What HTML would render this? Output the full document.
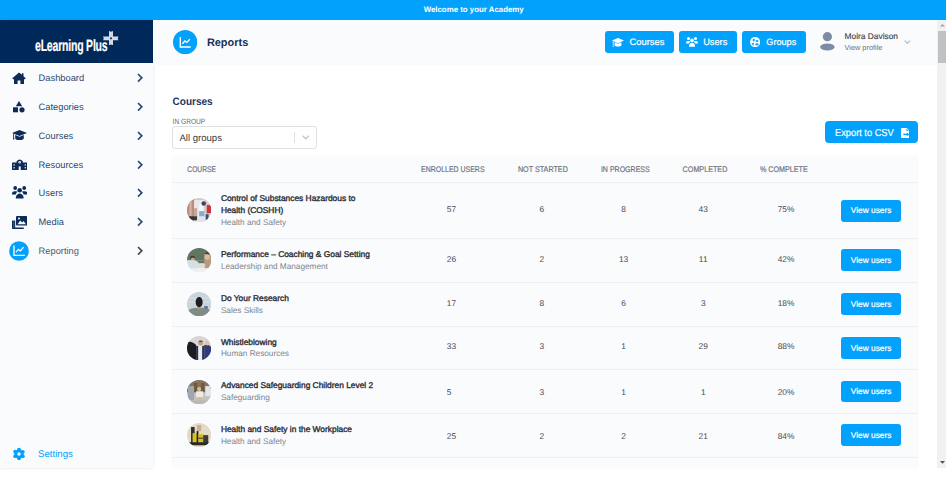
<!DOCTYPE html>
<html><head><meta charset="utf-8"><title>Reports</title>
<style>
html,body{margin:0;padding:0;}
body{width:946px;height:480px;position:relative;overflow:hidden;background:#fff;font-family:"Liberation Sans",sans-serif;}
.t{position:absolute;white-space:nowrap;}
.r{position:absolute;display:block;}
</style></head><body>
<div class="r" style="left:0px;top:0px;width:946.00px;height:20.00px;background:#02a2fc;"></div>
<div class="r" style="left:0px;top:20px;width:153.00px;height:448.00px;background:#fafbfd;box-shadow:0 0 3px rgba(0,0,0,0.12);"></div>
<div class="r" style="left:0px;top:20px;width:153.00px;height:43.30px;background:#00295a;"></div>
<svg class="r" style="left:103px;top:30.5px;" width="15.5" height="14.25" viewBox="0 0 15.5 14.25"><path d="M6 0L8 .8 10 0V14.25L8 13.45 6 14.25z" fill="#d3dae4"/><path d="M0 5.5H15.5L14.7 7.4 15.5 9.25H0L.8 7.4z" fill="#d3dae4"/><circle cx="8" cy="7.3" r="1.1" fill="#1d3a66"/></svg>
<svg class="r" style="left:137.1px;top:73.1px;" width="6" height="9.6" viewBox="0 0 6 9.6"><path d="M1 1l3.8 3.8L1 8.6" fill="none" stroke="#284a79" stroke-width="1.7"/></svg>
<svg class="r" style="left:137.1px;top:101.89999999999999px;" width="6" height="9.6" viewBox="0 0 6 9.6"><path d="M1 1l3.8 3.8L1 8.6" fill="none" stroke="#284a79" stroke-width="1.7"/></svg>
<svg class="r" style="left:137.1px;top:130.7px;" width="6" height="9.6" viewBox="0 0 6 9.6"><path d="M1 1l3.8 3.8L1 8.6" fill="none" stroke="#284a79" stroke-width="1.7"/></svg>
<svg class="r" style="left:137.1px;top:159.5px;" width="6" height="9.6" viewBox="0 0 6 9.6"><path d="M1 1l3.8 3.8L1 8.6" fill="none" stroke="#284a79" stroke-width="1.7"/></svg>
<svg class="r" style="left:137.1px;top:188.3px;" width="6" height="9.6" viewBox="0 0 6 9.6"><path d="M1 1l3.8 3.8L1 8.6" fill="none" stroke="#284a79" stroke-width="1.7"/></svg>
<svg class="r" style="left:137.1px;top:217.1px;" width="6" height="9.6" viewBox="0 0 6 9.6"><path d="M1 1l3.8 3.8L1 8.6" fill="none" stroke="#284a79" stroke-width="1.7"/></svg>
<svg class="r" style="left:137.1px;top:245.9px;" width="6" height="9.6" viewBox="0 0 6 9.6"><path d="M1 1l3.8 3.8L1 8.6" fill="none" stroke="#4a4a4a" stroke-width="1.7"/></svg>
<svg class="r" style="left:12px;top:72px;" width="14" height="12" viewBox="0 0 14 12"><path d="M7 0.5L0.3 6.3l1 1.1L2 6.8V12h3.6V8.6h2.8V12H12V6.8l0.7 0.6 1-1.1L11.5 4.3V1.2H9.8v1.6z" fill="#0d2b57"/></svg>
<svg class="r" style="left:13.3px;top:101.3px;" width="12" height="11.5" viewBox="0 0 12 11.5"><path d="M6 0L9.2 5.2H2.8z" fill="#0d2b57"/><rect x="0" y="6.3" width="5" height="5" fill="#0d2b57"/><circle cx="9" cy="8.8" r="2.6" fill="#0d2b57"/></svg>
<svg class="r" style="left:11.7px;top:130.2px;" width="15" height="10.2" viewBox="0 0 15 10.2"><path d="M7.5 0L15 3 7.5 6 0 3z" fill="#0d2b57"/><path d="M3.2 5v3.2c0 1.2 2 2 4.3 2s4.3-.8 4.3-2V5L7.5 6.8z" fill="#0d2b57"/><path d="M1.6 3.6v4.6" stroke="#0d2b57" stroke-width="0.9"/><path d="M0.9 9.6h1.5l-.3-1.6h-.9z" fill="#0d2b57"/></svg>
<svg class="r" style="left:11.7px;top:158.4px;" width="15.4" height="12" viewBox="0 0 15.4 12"><path d="M4.6 3.2Q7.7 0 10.8 3.2V12H4.6z" fill="#0d2b57"/><rect x="0" y="4.6" width="15.4" height="7.4" rx=".6" fill="#0d2b57"/><circle cx="7.7" cy="4.3" r="1.3" fill="#f9fafc"/><circle cx="7.7" cy="4.3" r=".5" fill="#0d2b57"/><rect x="6.7" y="8.4" width="2" height="3.6" fill="#f9fafc"/><rect x="1.5" y="6.3" width="1.2" height="1.3" fill="#f9fafc"/><rect x="1.5" y="9.1" width="1.2" height="1.3" fill="#f9fafc"/><rect x="12.7" y="6.3" width="1.2" height="1.3" fill="#f9fafc"/><rect x="12.7" y="9.1" width="1.2" height="1.3" fill="#f9fafc"/></svg>
<svg class="r" style="left:11.7px;top:186.4px;" width="15.4" height="12.6" viewBox="0 0 15.4 12.6"><circle cx="3.2" cy="2" r="1.9" fill="#0d2b57"/><circle cx="12.2" cy="2" r="1.9" fill="#0d2b57"/><circle cx="7.7" cy="4.3" r="2.3" fill="#0d2b57"/><path d="M0 7.6c0-1.4 1-2.4 2.4-2.4h1.8c.6 0 1 .2 1.4.5-1 .6-1.6 1.6-1.7 2.7H0z" fill="#0d2b57"/><path d="M15.4 7.6c0-1.4-1-2.4-2.4-2.4h-1.8c-.6 0-1 .2-1.4.5 1 .6 1.6 1.6 1.7 2.7h3.9z" fill="#0d2b57"/><path d="M3.8 11.8c0-2 1.4-4.3 3.9-4.3s3.9 2.3 3.9 4.3v.8H3.8z" fill="#0d2b57"/></svg>
<svg class="r" style="left:11.7px;top:215.8px;" width="15.4" height="13.1" viewBox="0 0 15.4 13.1"><rect x="4" y="0" width="11.4" height="9.6" rx="1" fill="#0d2b57"/><path d="M5.6 8.2L8.3 4.6l1.8 2 1.5-1.6 2.3 3.2z" fill="#f9fafc"/><circle cx="7" cy="2.6" r="1" fill="#f9fafc"/><path d="M0 4.6h3.2v7h8.6v1.4H1c-.6 0-1-.4-1-1z" fill="#0d2b57"/><path d="M1.8 4.6v8" stroke="#f9fafc" stroke-width="0.5" stroke-dasharray="1 1"/></svg>
<svg class="r" style="left:8.7px;top:241.2px;" width="20" height="20" viewBox="0 0 20 20"><circle cx="10" cy="10" r="9.8" fill="#02a2fc"/><path d="M5 4.6v9.7h10.8" fill="none" stroke="#fff" stroke-width="1.3"/><path d="M7 11.2l2.4-2.8 1.9 1.5 3.2-3.6" fill="none" stroke="#fff" stroke-width="1.3"/></svg>
<svg class="r" style="left:12.0px;top:446.9px;" width="14" height="14" viewBox="0 0 14 14"><circle cx="7" cy="7" r="4.6" fill="#02a2fc"/><circle cx="7.00" cy="2.65" r="1.95" fill="#02a2fc"/><circle cx="10.77" cy="4.83" r="1.95" fill="#02a2fc"/><circle cx="10.77" cy="9.17" r="1.95" fill="#02a2fc"/><circle cx="7.00" cy="11.35" r="1.95" fill="#02a2fc"/><circle cx="3.23" cy="9.17" r="1.95" fill="#02a2fc"/><circle cx="3.23" cy="4.82" r="1.95" fill="#02a2fc"/><circle cx="7" cy="7" r="1.75" fill="#f9fafc"/></svg>
<div class="r" style="left:153px;top:20px;width:784.00px;height:44.60px;background:#fafbfd;"></div>
<svg class="r" style="left:172.6px;top:30px;" width="24.3" height="24.3" viewBox="0 0 24 24"><circle cx="12" cy="12" r="12" fill="#02a2fc"/><path d="M7.2 7v9.8h10.2" fill="none" stroke="#fff" stroke-width="1.3"/><path d="M9.2 13.6l2.6-2.8 1.9 1.5 2.9-3.2" fill="none" stroke="#fff" stroke-width="1.3"/></svg>
<div class="r" style="left:605.2px;top:31.2px;width:68.80px;height:21.50px;background:#02a2fc;border-radius:3px;"></div>
<div class="r" style="left:679.2px;top:31.2px;width:57.80px;height:21.50px;background:#02a2fc;border-radius:3px;"></div>
<div class="r" style="left:742px;top:31.2px;width:63.80px;height:21.50px;background:#02a2fc;border-radius:3px;"></div>
<svg class="r" style="left:612.1px;top:37.6px;" width="12" height="9" viewBox="0 0 12 9"><path d="M6 0L12 2.6 6 5.2 0 2.6z" fill="#fff"/><path d="M2.6 4.2v2.7c0 1 1.5 1.7 3.4 1.7s3.4-.7 3.4-1.7V4.2L6 5.8z" fill="#fff"/><path d="M1.2 3v4" stroke="#fff" stroke-width="0.8"/><path d="M.6 8.8h1.3l-.3-1.5H.9z" fill="#fff"/></svg>
<svg class="r" style="left:686px;top:37.2px;" width="12" height="9.8" viewBox="0 0 12 9.8"><circle cx="2.5" cy="1.6" r="1.5" fill="#fff"/><circle cx="9.5" cy="1.6" r="1.5" fill="#fff"/><circle cx="6" cy="3.4" r="1.8" fill="#fff"/><path d="M0 6c0-1.1.8-1.9 1.9-1.9h1.4c.4 0 .8.1 1.1.4-.8.5-1.3 1.3-1.3 2.1H0z" fill="#fff"/><path d="M12 6c0-1.1-.8-1.9-1.9-1.9H8.7c-.4 0-.8.1-1.1.4.8.5 1.3 1.3 1.3 2.1H12z" fill="#fff"/><path d="M3 9.2c0-1.6 1.1-3.4 3-3.4s3 1.8 3 3.4v.6H3z" fill="#fff"/></svg>
<svg class="r" style="left:750px;top:37px;" width="10.2" height="10.2" viewBox="0 0 10 10"><circle cx="5" cy="5" r="5" fill="#fff"/><ellipse cx="3.7" cy="3" rx="1.1" ry="1.3" fill="#02a2fc"/><ellipse cx="6.9" cy="4" rx="1.4" ry="1.0" fill="#02a2fc"/><path d="M1.4 6.2L3.9 5.6 3.4 8.9z" fill="#02a2fc"/><ellipse cx="6.8" cy="7.3" rx="1.7" ry="1.1" fill="#02a2fc"/></svg>
<svg class="r" style="left:820.2px;top:32.4px;" width="14.8" height="19" viewBox="0 0 14.8 19"><circle cx="7.4" cy="4.65" r="4.6" fill="#7d8ca6"/><ellipse cx="7.4" cy="15" rx="7.3" ry="3.5" fill="#7d8ca6"/></svg>
<svg class="r" style="left:904.1px;top:39.7px;" width="6.8" height="4.4" viewBox="0 0 6.8 4.4"><path d="M.6 .6l2.8 2.8 2.8-2.8" fill="none" stroke="#b9bec6" stroke-width="1.2"/></svg>
<div class="r" style="left:937px;top:20px;width:9.00px;height:447.50px;background:#f1f1f1;"></div>
<div class="r" style="left:938.2px;top:30.6px;width:7.80px;height:32.40px;background:#c1c1c1;"></div>
<svg class="r" style="left:939.6px;top:24.4px;" width="5" height="2.6" viewBox="0 0 5 2.6"><path d="M0 2.6L2.5 0 5 2.6z" fill="#a3a3a3"/></svg>
<svg class="r" style="left:939.8px;top:461px;" width="5" height="2.8" viewBox="0 0 5 2.8"><path d="M0 0L2.5 2.8 5 0z" fill="#505050"/></svg>
<div class="r" style="left:172.4px;top:126.4px;width:144.20px;height:22.20px;background:#fff;border:1px solid #dfe0e3;border-radius:3px;box-sizing:border-box;"></div>
<div class="r" style="left:293.6px;top:132px;width:1.20px;height:11.00px;background:#e2e2e2;"></div>
<svg class="r" style="left:301.5px;top:135.3px;" width="7.5" height="4.8" viewBox="0 0 7.5 4.8"><path d="M.7 .7l3.1 3.1 3.1-3.1" fill="none" stroke="#c4c4c4" stroke-width="1.4"/></svg>
<div class="r" style="left:825px;top:121.3px;width:92.70px;height:22.20px;background:#02a2fc;border-radius:4px;"></div>
<svg class="r" style="left:900.5px;top:127.75px;" width="8.4" height="10" viewBox="0 0 8.4 10"><path d="M0 .8Q0 0 .8 0H5.8L8.4 2.6V9.2Q8.4 10 7.6 10H.8Q0 10 0 9.2z" fill="#fff"/><path d="M5.4 .6V2.3Q5.4 3 6.1 3H7.8z" fill="#02a2fc"/><path d="M2.3 6.4H6.6" stroke="#02a2fc" stroke-width="1.4"/><path d="M5.8 4.5L8.5 6.4 5.8 8.3z" fill="#02a2fc"/></svg>
<div class="r" style="left:172px;top:155.75px;width:746.30px;height:311.75px;background:#fafbfd;border-radius:4px 4px 0 0;box-shadow:0 0 2px rgba(0,0,0,0.05);"></div>
<div class="r" style="left:172px;top:181.8px;width:746.30px;height:1.00px;background:#edeef1;"></div>
<div class="r" style="left:172px;top:237.8px;width:746.30px;height:1.00px;background:#edeef1;"></div>
<div class="r" style="left:172px;top:281.8px;width:746.30px;height:1.00px;background:#edeef1;"></div>
<div class="r" style="left:172px;top:325.7px;width:746.30px;height:1.00px;background:#edeef1;"></div>
<div class="r" style="left:172px;top:369.3px;width:746.30px;height:1.00px;background:#edeef1;"></div>
<div class="r" style="left:172px;top:413.0px;width:746.30px;height:1.00px;background:#edeef1;"></div>
<div class="r" style="left:172px;top:456.7px;width:746.30px;height:1.00px;background:#edeef1;"></div>
<svg class="r" style="left:187px;top:198px;" width="24.3" height="24.3" viewBox="0 0 24 24"><defs><clipPath id="c0"><circle cx="12" cy="12" r="12"/></clipPath></defs><g clip-path="url(#c0)"><rect width="24" height="24" fill="#d9c9c0"/><rect x="0" y="0" width="7.5" height="24" fill="#b98e7e"/><rect x="2.5" y="2" width="2" height="18" fill="#d6b7a8"/><rect x="7" y="2" width="10" height="22" fill="#e9e8eb"/><rect x="12" y="6" width="4" height="11" fill="#f5f6f8"/><rect x="12" y="13" width="5" height="5" fill="#7aaedb"/><circle cx="16.5" cy="5.5" r="2.2" fill="#34466e"/><rect x="19.5" y="7" width="4.5" height="8" fill="#c8343c"/><rect x="2" y="18" width="8" height="4" fill="#3a3636"/><rect x="18.5" y="16" width="2.8" height="7" fill="#3d4c78"/><rect x="10" y="19" width="8" height="5" fill="#e4e4e6"/><rect x="7" y="10" width="3" height="8" fill="#a67a66" opacity=".6"/></g></svg>
<div class="r" style="left:840.8px;top:199.85px;width:60.00px;height:21.80px;background:#02a2fc;border-radius:3px;"></div>
<svg class="r" style="left:187px;top:248.10000000000002px;" width="24.3" height="24.3" viewBox="0 0 24 24"><defs><clipPath id="c1"><circle cx="12" cy="12" r="12"/></clipPath></defs><g clip-path="url(#c1)"><rect width="24" height="24" fill="#e6ebe9"/><path d="M0 0h24v12H0z" fill="#5f7762"/><path d="M6 12h12v3H6z" fill="#60786a"/><circle cx="5.5" cy="10" r="2.3" fill="#3b3530"/><circle cx="5.8" cy="11.5" r="2" fill="#caa58a"/><path d="M0 14c1-1.5 3-2 5.5-2s4.5.5 5.5 2v8H0z" fill="#d3e0e6"/><path d="M17 6h7v14h-7z" fill="#b89a80"/><circle cx="20" cy="9" r="2.6" fill="#dcbb9e"/><path d="M17.5 5.5a3 2.5 0 0 1 5.5 1z" fill="#3a3028"/><path d="M11 16h7v3h-7z" fill="#e0d8cf"/><path d="M0 20h24v4H0z" fill="#eef1f0"/></g></svg>
<div class="r" style="left:840.8px;top:249.20000000000002px;width:60.00px;height:21.80px;background:#02a2fc;border-radius:3px;"></div>
<svg class="r" style="left:187px;top:292.1px;" width="24.3" height="24.3" viewBox="0 0 24 24"><defs><clipPath id="c2"><circle cx="12" cy="12" r="12"/></clipPath></defs><g clip-path="url(#c2)"><rect width="24" height="24" fill="#c9d3dc"/><path d="M1 6h22M1 10h22" stroke="#dde4ea" stroke-width=".8"/><rect x="17" y="14" width="3.5" height="4" fill="#4e6e9c"/><path d="M0 24v-5c3-3 7-3.5 12-3.5s9 .5 12 3.5v5z" fill="#7f8b87"/><rect x="10" y="14.5" width="4" height="2.5" fill="#c8946a"/><ellipse cx="12" cy="10" rx="3.5" ry="5" fill="#1d1d22"/></g></svg>
<div class="r" style="left:840.8px;top:293.20000000000005px;width:60.00px;height:21.80px;background:#02a2fc;border-radius:3px;"></div>
<svg class="r" style="left:187px;top:336.0px;" width="24.3" height="24.3" viewBox="0 0 24 24"><defs><clipPath id="c3"><circle cx="12" cy="12" r="12"/></clipPath></defs><g clip-path="url(#c3)"><rect width="24" height="24" fill="#d8d6d4"/><path d="M0 6c4-1 7 1 9 3v15H0z" fill="#1b1c24"/><path d="M17 9c3-1 5 0 7 2v13h-7z" fill="#2e3c7c"/><circle cx="20" cy="7" r="2.4" fill="#d9c8a8"/><path d="M9 10h8v14H9z" fill="#2a2f48"/><path d="M11 10h4v14h-4z" fill="#e9ebef"/><circle cx="13.5" cy="7" r="2.4" fill="#c49c80"/><path d="M11.2 5.8a2.4 2 0 0 1 4.6 0z" fill="#4a3a30"/></g></svg>
<div class="r" style="left:840.8px;top:337.1px;width:60.00px;height:21.80px;background:#02a2fc;border-radius:3px;"></div>
<svg class="r" style="left:187px;top:379.6px;" width="24.3" height="24.3" viewBox="0 0 24 24"><defs><clipPath id="c4"><circle cx="12" cy="12" r="12"/></clipPath></defs><g clip-path="url(#c4)"><rect width="24" height="24" fill="#c6c2be"/><path d="M0 0h24v12H0z" fill="#86725e"/><rect x="7" y="3" width="3" height="9" fill="#6a5a3a"/><rect x="14" y="3" width="3" height="9" fill="#6c5c3c"/><rect x="1" y="6" width="6" height="14" fill="#9ea6b0"/><rect x="18" y="6" width="6" height="10" fill="#dfe6ec"/><circle cx="12" cy="9" r="2" fill="#d8b89c"/><path d="M9 11h7v6H9z" fill="#eeeae6"/><path d="M10 17h5v3h-5z" fill="#d7b8a6"/><path d="M0 20h24v4H0z" fill="#bdb8b4"/></g></svg>
<div class="r" style="left:840.8px;top:380.70000000000005px;width:60.00px;height:21.80px;background:#02a2fc;border-radius:3px;"></div>
<svg class="r" style="left:187px;top:423.3px;" width="24.3" height="24.3" viewBox="0 0 24 24"><defs><clipPath id="c5"><circle cx="12" cy="12" r="12"/></clipPath></defs><g clip-path="url(#c5)"><rect width="24" height="24" fill="#e4dac9"/><rect x="10" y="2" width="4" height="6" fill="#c8b090"/><rect x="4" y="4" width="3.5" height="17" fill="#2c2c2c"/><rect x="5.5" y="10" width="4.5" height="11" fill="#d9c21e"/><rect x="9.5" y="8" width="1.8" height="13" fill="#222"/><rect x="11.3" y="11" width="5" height="8" fill="#d6bf1c"/><rect x="16" y="12" width="5" height="9" fill="#3a3a3a"/><rect x="2" y="19" width="20" height="3" fill="#2a2a28"/><rect x="11" y="14.5" width="5" height="1" fill="#3a3a2a"/></g></svg>
<div class="r" style="left:840.8px;top:424.40000000000003px;width:60.00px;height:21.80px;background:#02a2fc;border-radius:3px;"></div>
<svg class="r" style="left:0;top:0" width="946" height="480" text-rendering="geometricPrecision" font-family="Liberation Sans">
<text x="473.70" y="11.70" font-size="7.86" fill="#fff" font-weight="bold" text-anchor="middle">Welcome to your Academy</text>
<text transform="translate(35.00 51.00) scale(0.6440 1)" font-size="16.3" fill="#fff" font-weight="bold" stroke="#fff" stroke-width="0.2" letter-spacing="-0.3">eLearning Plus</text>
<text x="38.60" y="81.10" font-size="9.3" fill="#2d4870">Dashboard</text>
<text x="38.60" y="109.90" font-size="9.3" fill="#2d4870">Categories</text>
<text x="38.60" y="138.70" font-size="9.3" fill="#2d4870">Courses</text>
<text x="38.60" y="167.50" font-size="9.3" fill="#2d4870">Resources</text>
<text x="38.60" y="196.30" font-size="9.3" fill="#2d4870">Users</text>
<text x="38.60" y="225.10" font-size="9.3" fill="#2d4870">Media</text>
<text x="38.60" y="253.90" font-size="9.3" fill="#555a63">Reporting</text>
<text x="38.00" y="457.00" font-size="9.68" fill="#02a2fc">Settings</text>
<text x="206.90" y="45.90" font-size="10.95" fill="#17305c" font-weight="bold">Reports</text>
<text x="629.60" y="45.00" font-size="9.34" fill="#fff" stroke="#fff" stroke-width="0.2">Courses</text>
<text x="703.20" y="45.00" font-size="9.22" fill="#fff" stroke="#fff" stroke-width="0.2">Users</text>
<text x="766.30" y="45.00" font-size="9.15" fill="#fff" stroke="#fff" stroke-width="0.2">Groups</text>
<text x="844.50" y="38.70" font-size="8.4" fill="#41454d" stroke="#41454d" stroke-width="0.15">Moira Davison</text>
<text x="844.50" y="50.40" font-size="7.36" fill="#6f747c">View profile</text>
<text transform="translate(172.60 104.60) scale(0.9200 1)" font-size="10.9" fill="#1a3462" font-weight="bold">Courses</text>
<text transform="translate(172.60 123.50) scale(0.8700 1)" font-size="7.6" fill="#62666d">IN GROUP</text>
<text x="179.40" y="140.80" font-size="9.58" fill="#3a3a3a">All groups</text>
<text transform="translate(835.00 136.20) scale(0.9270 1)" font-size="10.0" fill="#fff" stroke="#fff" stroke-width="0.2">Export to CSV</text>
<text transform="translate(187.30 171.80) scale(0.8183 1)" font-size="8.2" fill="#6e7279" stroke="#6e7279" stroke-width="0.18">COURSE</text>
<text transform="translate(421.10 171.80) scale(0.8500 1)" font-size="8.2" fill="#6e7279" stroke="#6e7279" stroke-width="0.18">ENROLLED USERS</text>
<text transform="translate(517.90 171.80) scale(0.8780 1)" font-size="8.2" fill="#6e7279" stroke="#6e7279" stroke-width="0.18">NOT STARTED</text>
<text transform="translate(600.90 171.80) scale(0.8585 1)" font-size="8.2" fill="#6e7279" stroke="#6e7279" stroke-width="0.18">IN PROGRESS</text>
<text transform="translate(682.60 171.80) scale(0.8780 1)" font-size="8.2" fill="#6e7279" stroke="#6e7279" stroke-width="0.18">COMPLETED</text>
<text transform="translate(759.90 171.80) scale(0.8756 1)" font-size="8.2" fill="#6e7279" stroke="#6e7279" stroke-width="0.18">% COMPLETE</text>
<text x="220.90" y="201.30" font-size="8.4" fill="#2a2c35" stroke="#2a2c35" stroke-width="0.35">Control of Substances Hazardous to</text>
<text x="220.90" y="213.10" font-size="8.4" fill="#2a2c35" stroke="#2a2c35" stroke-width="0.35">Health (COSHH)</text>
<text x="220.90" y="225.10" font-size="8.22" fill="#80858c">Health and Safety</text>
<text x="446.80" y="211.60" font-size="8.36" fill="#474a52">57</text>
<text x="541.70" y="211.60" font-size="8.36" fill="#474a52" text-anchor="middle">6</text>
<text x="623.60" y="211.60" font-size="8.36" fill="#474a52" text-anchor="middle">8</text>
<text x="703.20" y="211.60" font-size="8.36" fill="#474a52" text-anchor="middle">43</text>
<text x="786.00" y="211.60" font-size="8.36" fill="#474a52" text-anchor="middle">75%</text>
<text x="850.80" y="213.45" font-size="8.35" fill="#fff" stroke="#fff" stroke-width="0.2">View users</text>
<text x="220.90" y="256.70" font-size="8.4" fill="#2a2c35" stroke="#2a2c35" stroke-width="0.35">Performance – Coaching &amp; Goal Setting</text>
<text x="220.90" y="268.50" font-size="8.22" fill="#80858c">Leadership and Management</text>
<text x="446.80" y="262.10" font-size="8.36" fill="#474a52">26</text>
<text x="541.70" y="262.10" font-size="8.36" fill="#474a52" text-anchor="middle">2</text>
<text x="623.60" y="262.10" font-size="8.36" fill="#474a52" text-anchor="middle">13</text>
<text x="703.20" y="262.10" font-size="8.36" fill="#474a52" text-anchor="middle">11</text>
<text x="786.00" y="262.10" font-size="8.36" fill="#474a52" text-anchor="middle">42%</text>
<text x="850.80" y="262.80" font-size="8.35" fill="#fff" stroke="#fff" stroke-width="0.2">View users</text>
<text x="220.90" y="300.70" font-size="8.4" fill="#2a2c35" stroke="#2a2c35" stroke-width="0.35">Do Your Research</text>
<text x="220.90" y="312.50" font-size="8.22" fill="#80858c">Sales Skills</text>
<text x="446.80" y="306.10" font-size="8.36" fill="#474a52">17</text>
<text x="541.70" y="306.10" font-size="8.36" fill="#474a52" text-anchor="middle">8</text>
<text x="623.60" y="306.10" font-size="8.36" fill="#474a52" text-anchor="middle">6</text>
<text x="703.20" y="306.10" font-size="8.36" fill="#474a52" text-anchor="middle">3</text>
<text x="786.00" y="306.10" font-size="8.36" fill="#474a52" text-anchor="middle">18%</text>
<text x="850.80" y="306.80" font-size="8.35" fill="#fff" stroke="#fff" stroke-width="0.2">View users</text>
<text x="220.90" y="344.60" font-size="8.4" fill="#2a2c35" stroke="#2a2c35" stroke-width="0.35">Whistleblowing</text>
<text x="220.90" y="356.40" font-size="8.22" fill="#80858c">Human Resources</text>
<text x="446.80" y="349.10" font-size="8.36" fill="#474a52">33</text>
<text x="541.70" y="349.10" font-size="8.36" fill="#474a52" text-anchor="middle">3</text>
<text x="623.60" y="349.10" font-size="8.36" fill="#474a52" text-anchor="middle">1</text>
<text x="703.20" y="349.10" font-size="8.36" fill="#474a52" text-anchor="middle">29</text>
<text x="786.00" y="349.10" font-size="8.36" fill="#474a52" text-anchor="middle">88%</text>
<text x="850.80" y="350.70" font-size="8.35" fill="#fff" stroke="#fff" stroke-width="0.2">View users</text>
<text x="220.90" y="388.20" font-size="8.4" fill="#2a2c35" stroke="#2a2c35" stroke-width="0.35">Advanced Safeguarding Children Level 2</text>
<text x="220.90" y="400.00" font-size="8.22" fill="#80858c">Safeguarding</text>
<text x="446.80" y="394.70" font-size="8.36" fill="#474a52">5</text>
<text x="541.70" y="394.70" font-size="8.36" fill="#474a52" text-anchor="middle">3</text>
<text x="623.60" y="394.70" font-size="8.36" fill="#474a52" text-anchor="middle">1</text>
<text x="703.20" y="394.70" font-size="8.36" fill="#474a52" text-anchor="middle">1</text>
<text x="786.00" y="394.70" font-size="8.36" fill="#474a52" text-anchor="middle">20%</text>
<text x="850.80" y="394.30" font-size="8.35" fill="#fff" stroke="#fff" stroke-width="0.2">View users</text>
<text x="220.90" y="431.90" font-size="8.4" fill="#2a2c35" stroke="#2a2c35" stroke-width="0.35">Health and Safety in the Workplace</text>
<text x="220.90" y="443.70" font-size="8.22" fill="#80858c">Health and Safety</text>
<text x="446.80" y="438.80" font-size="8.36" fill="#474a52">25</text>
<text x="541.70" y="438.80" font-size="8.36" fill="#474a52" text-anchor="middle">2</text>
<text x="623.60" y="438.80" font-size="8.36" fill="#474a52" text-anchor="middle">2</text>
<text x="703.20" y="438.80" font-size="8.36" fill="#474a52" text-anchor="middle">21</text>
<text x="786.00" y="438.80" font-size="8.36" fill="#474a52" text-anchor="middle">84%</text>
<text x="850.80" y="438.00" font-size="8.35" fill="#fff" stroke="#fff" stroke-width="0.2">View users</text>
</svg>
</body></html>
